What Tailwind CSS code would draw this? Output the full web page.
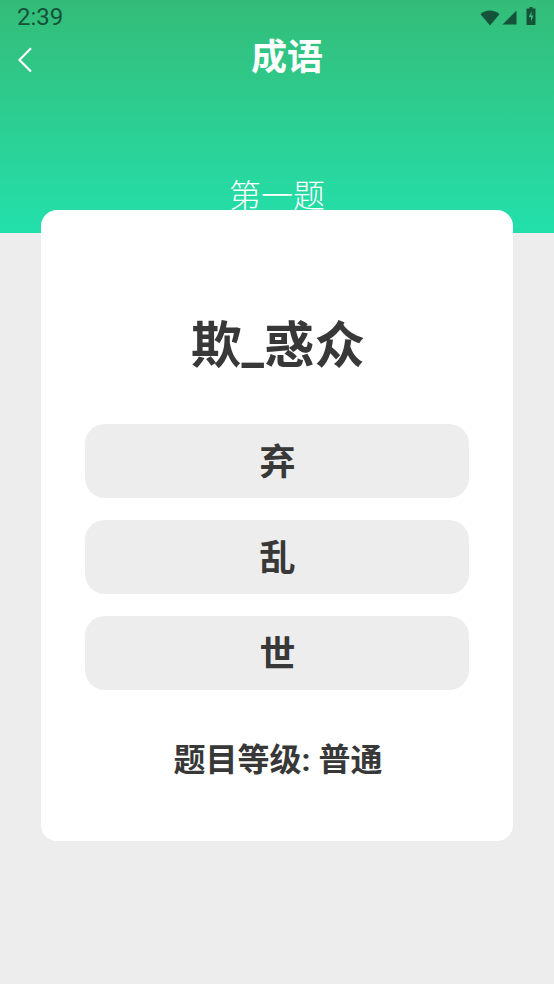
<!doctype html>
<html><head><meta charset="utf-8"><script src="https://cdn.jsdelivr.net/npm/@tailwindcss/browser@4"></script></head>
<body class="m-0">
<div class="relative w-[554px] h-[984px] overflow-hidden bg-[#ededed] font-['Roboto','Noto_Sans_CJK_SC',sans-serif]">
  <div class="h-[233px] bg-gradient-to-b from-[#33bc78] to-[#22e0ab] flex flex-col">
    <div class="h-[34px] pl-[17px] pr-[18px] flex items-center justify-between">
      <span class="text-[24px] leading-[34px] text-[#14533a]">2:39</span>
      <div class="flex items-center">
        <svg width="20" height="17" viewBox="0 0 20 17"><path d="M.5 5.200C3 2.800 6.300 1.500 10 1.500s7 1.300 9.500 3.700L10 16.500z" fill="#14533a"/></svg>
        <svg width="15" height="15" viewBox="0 0 15 15" class="ml-[2px]"><path d="M.5 14.500 14.500.5v14z" fill="#14533a"/></svg>
        <svg width="10" height="18" viewBox="0 0 10 18" class="ml-[9px] mt-[-2px]"><path fill-rule="evenodd" d="M3.500 0h3v1.500h3V18H.5V1.500h3zM5.800 4 2.800 10h2.200v4.500L7.500 8.500H5.300z" fill="#14533a"/></svg>
      </div>
    </div>
    <div class="relative h-[46px] flex items-center justify-center">
      <svg class="absolute left-[15px] top-[12px]" width="20" height="28" viewBox="0 0 20 28" fill="none"><path d="M16 2.200 4.500 14 16 25.500" stroke="#fff" stroke-width="2.200"/></svg>
      <span class="text-[36px] font-bold text-white leading-[46px] ml-[20px] mt-[2px]">成语</span>
    </div>
    <div class="mt-[94px] text-center text-[32px] leading-[44px] text-white font-light">第一题</div>
  </div>
  <div class="absolute left-[40.500px] top-[210px] w-[472.500px] h-[630.500px] bg-white rounded-[16px] pl-[44.500px] pr-[44px] flex flex-col">
    <div class="mt-[103px] h-[66px] text-center text-[50.500px] leading-[66px] font-bold text-[#383838] ml-[2px]">欺_惑众</div>
    <div class="mt-[45px] flex flex-col gap-[22px]">
      <div class="h-[74px] rounded-[20px] bg-[#ededed] flex items-center justify-center text-[36px] leading-[40px] pt-[4px] pl-[1px] font-bold text-[#383838]">弃</div>
      <div class="h-[74px] rounded-[20px] bg-[#ededed] flex items-center justify-center text-[36px] leading-[40px] pt-[4px] pl-[1px] font-bold text-[#383838]">乱</div>
      <div class="h-[74px] rounded-[20px] bg-[#ededed] flex items-center justify-center text-[36px] leading-[40px] pt-[4px] pl-[1px] font-bold text-[#383838]">世</div>
    </div>
    <div class="mt-[48px] text-center text-[32px] leading-[44px] font-bold text-[#383838] ml-[2px]">题目等级: 普通</div>
  </div>
</div>
</body></html>
